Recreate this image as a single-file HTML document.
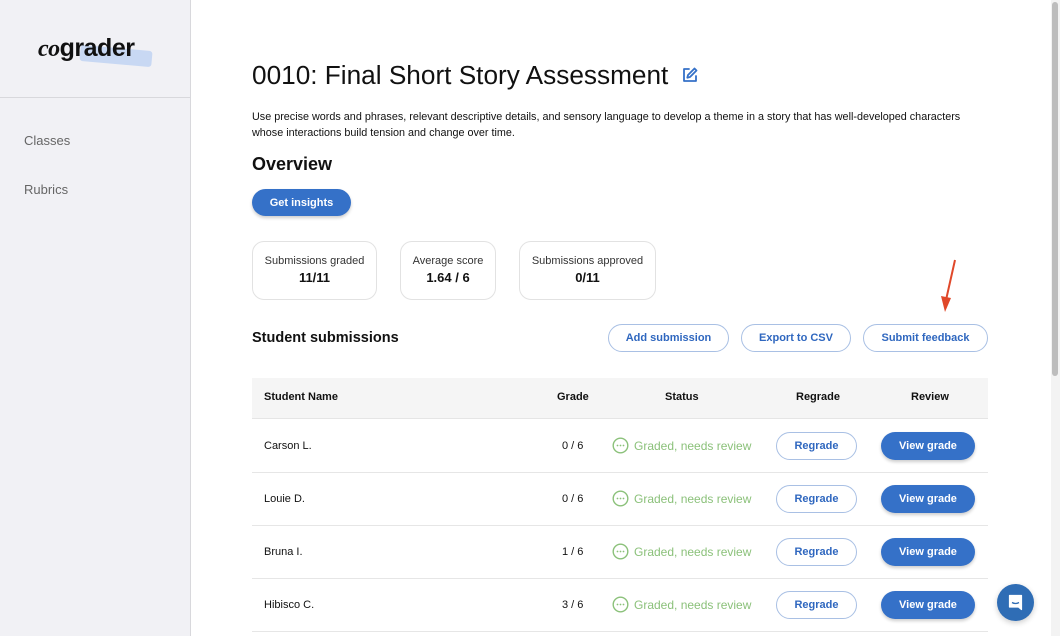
<!DOCTYPE html>
<html><head><style>
*{box-sizing:border-box;margin:0;padding:0}
body{width:1060px;height:636px;overflow:hidden;background:#fff;font-family:"Liberation Sans",Arial,sans-serif;position:relative;color:#111}
.side{position:absolute;left:0;top:0;width:191px;height:636px;background:#f1f1f5;border-right:1px solid #d8d8dc}
.side .hr{position:absolute;left:0;top:97px;width:190px;height:1px;background:#d8d8dc}
.side .nav{position:absolute;left:24px;font-size:13px;color:#666}
.abs{position:absolute}
h1{position:absolute;left:252px;top:60px;font-size:26.2px;font-weight:400;color:#111;white-space:nowrap}
.desc{position:absolute;left:252px;top:110px;width:740px;font-size:10.8px;line-height:15.5px;color:#111}
.btn{position:absolute;border-radius:16px;font-size:11px;font-weight:bold;display:flex;align-items:center;justify-content:center}
.blue{background:#3571c8;color:#fff;box-shadow:0 2px 3px rgba(0,0,0,.2)}
.out{border:1px solid #a9c0e4;color:#2f67bf;background:#fff}
.card{position:absolute;top:241px;height:59px;border:1px solid #e2e2e2;border-radius:12px;text-align:center;font-size:11px;color:#333;padding-top:13px}
.card b{display:block;font-size:13px;color:#111;margin-top:3px}
.th{position:absolute;left:252px;top:378px;width:736px;height:41px;background:#f5f5f5;border-bottom:1px solid #e5e5e5}
.t{position:absolute;font-size:11px}
.line{position:absolute;left:252px;width:736px;height:1px;background:#e6e6e6}
.st{position:absolute;left:612px;color:#8bc17a;font-size:12px;display:flex;align-items:center;gap:5px}
</style></head><body>
<div class="side">
<div class="abs" style="left:38px;top:38px;width:115px;height:26px">
<div class="abs" style="left:42px;top:10px;width:72px;height:16px;background:#c8d8f3;transform:rotate(5deg);border-radius:3px"></div>
<div class="abs" style="left:0;top:-4px;font-size:25px;font-weight:bold;letter-spacing:-0.5px;color:#111"><i style="font-family:'Liberation Serif';font-size:24px">co</i>grader</div>
</div>
<div class="hr"></div>
<div class="nav" style="top:133px">Classes</div>
<div class="nav" style="top:182px">Rubrics</div>
</div>
<h1>0010: Final Short Story Assessment</h1>
<svg class="abs" style="left:681px;top:66px" width="18" height="18" viewBox="0 0 18 18" fill="none" stroke="#3571c8" stroke-width="1.8" stroke-linecap="round" stroke-linejoin="round"><path d="M8 3H3v12h12V10"/><path d="M13.5 2.5l2 2L9 11l-2.7.7L7 9z"/></svg>
<div class="desc">Use precise words and phrases, relevant descriptive details, and sensory language to develop a theme in a story that has well-developed characters<br>whose interactions build tension and change over time.</div>
<div class="abs" style="left:252px;top:154px;font-size:18px;font-weight:bold">Overview</div>
<div class="btn blue" style="left:252px;top:189px;width:99px;height:27px">Get insights</div>
<div class="card" style="left:252px;width:125px">Submissions graded<b>11/11</b></div>
<div class="card" style="left:400px;width:96px">Average score<b>1.64 / 6</b></div>
<div class="card" style="left:519px;width:137px">Submissions approved<b>0/11</b></div>
<div class="abs" style="left:252px;top:330px;font-size:14.5px;font-weight:bold">Student submissions</div>
<div class="btn out" style="left:608px;top:324px;width:121px;height:28px">Add submission</div>
<div class="btn out" style="left:741px;top:324px;width:110px;height:28px">Export to CSV</div>
<div class="btn out" style="left:863px;top:324px;width:125px;height:28px">Submit feedback</div>
<svg class="abs" style="left:935px;top:258px" width="24" height="58"><path d="M20 2L11 42" stroke="#e0482a" stroke-width="2"/><path d="M6 38L10 54L16 40z" fill="#e0482a"/></svg>
<div class="th"></div>
<div class="t" style="left:264px;top:391px;font-weight:bold">Student Name</div>
<div class="t" style="left:557px;top:391px;font-weight:bold">Grade</div>
<div class="t" style="left:665px;top:391px;font-weight:bold">Status</div>
<div class="t" style="left:796px;top:391px;font-weight:bold">Regrade</div>
<div class="t" style="left:911px;top:391px;font-weight:bold">Review</div>
<div class="t" style="left:264px;top:440px">Carson L.</div><div class="t" style="left:562px;top:440px">0 / 6</div>
<div class="t" style="left:264px;top:493px">Louie D.</div><div class="t" style="left:562px;top:493px">0 / 6</div>
<div class="t" style="left:264px;top:546px">Bruna I.</div><div class="t" style="left:562px;top:546px">1 / 6</div>
<div class="t" style="left:264px;top:599px">Hibisco C.</div><div class="t" style="left:562px;top:599px">3 / 6</div>
<div class="line" style="top:472px"></div><div class="line" style="top:525px"></div><div class="line" style="top:578px"></div><div class="line" style="top:631px"></div>
<div class="st" style="top:437px"><svg width="17" height="17"><circle cx="8.5" cy="8.5" r="7.3" fill="none" stroke="#8bc17a" stroke-width="1.4"/><circle cx="5.5" cy="8.5" r=".9" fill="#8bc17a"/><circle cx="8.5" cy="8.5" r=".9" fill="#8bc17a"/><circle cx="11.5" cy="8.5" r=".9" fill="#8bc17a"/></svg>Graded, needs review</div>
<div class="st" style="top:490px"><svg width="17" height="17"><circle cx="8.5" cy="8.5" r="7.3" fill="none" stroke="#8bc17a" stroke-width="1.4"/><circle cx="5.5" cy="8.5" r=".9" fill="#8bc17a"/><circle cx="8.5" cy="8.5" r=".9" fill="#8bc17a"/><circle cx="11.5" cy="8.5" r=".9" fill="#8bc17a"/></svg>Graded, needs review</div>
<div class="st" style="top:543px"><svg width="17" height="17"><circle cx="8.5" cy="8.5" r="7.3" fill="none" stroke="#8bc17a" stroke-width="1.4"/><circle cx="5.5" cy="8.5" r=".9" fill="#8bc17a"/><circle cx="8.5" cy="8.5" r=".9" fill="#8bc17a"/><circle cx="11.5" cy="8.5" r=".9" fill="#8bc17a"/></svg>Graded, needs review</div>
<div class="st" style="top:596px"><svg width="17" height="17"><circle cx="8.5" cy="8.5" r="7.3" fill="none" stroke="#8bc17a" stroke-width="1.4"/><circle cx="5.5" cy="8.5" r=".9" fill="#8bc17a"/><circle cx="8.5" cy="8.5" r=".9" fill="#8bc17a"/><circle cx="11.5" cy="8.5" r=".9" fill="#8bc17a"/></svg>Graded, needs review</div>
<div class="btn out" style="left:776px;top:432px;width:81px;height:28px">Regrade</div>
<div class="btn out" style="left:776px;top:485px;width:81px;height:28px">Regrade</div>
<div class="btn out" style="left:776px;top:538px;width:81px;height:28px">Regrade</div>
<div class="btn out" style="left:776px;top:591px;width:81px;height:28px">Regrade</div>
<div class="btn blue" style="left:881px;top:432px;width:94px;height:28px">View grade</div>
<div class="btn blue" style="left:881px;top:485px;width:94px;height:28px">View grade</div>
<div class="btn blue" style="left:881px;top:538px;width:94px;height:28px">View grade</div>
<div class="btn blue" style="left:881px;top:591px;width:94px;height:28px">View grade</div>
<div class="abs" style="left:997px;top:584px;width:37px;height:37px;border-radius:50%;background:#2f6db5;box-shadow:0 2px 6px rgba(0,0,0,.2)">
<svg width="37" height="37"><path d="M12.5 11.5h12v14l-3-2.5h-9z" fill="#fff" stroke="#fff" stroke-linejoin="round" stroke-width="1.2"/><path d="M15 18.5q3.5 2 7 0" stroke="#2f6db5" stroke-width="1.3" fill="none"/></svg></div>
<div class="abs" style="left:1051px;top:0;width:9px;height:636px;background:#f3f3f3"></div>
<div class="abs" style="left:1052px;top:2px;width:6px;height:374px;background:#bdbdbd;border-radius:3px"></div>
</body></html>
